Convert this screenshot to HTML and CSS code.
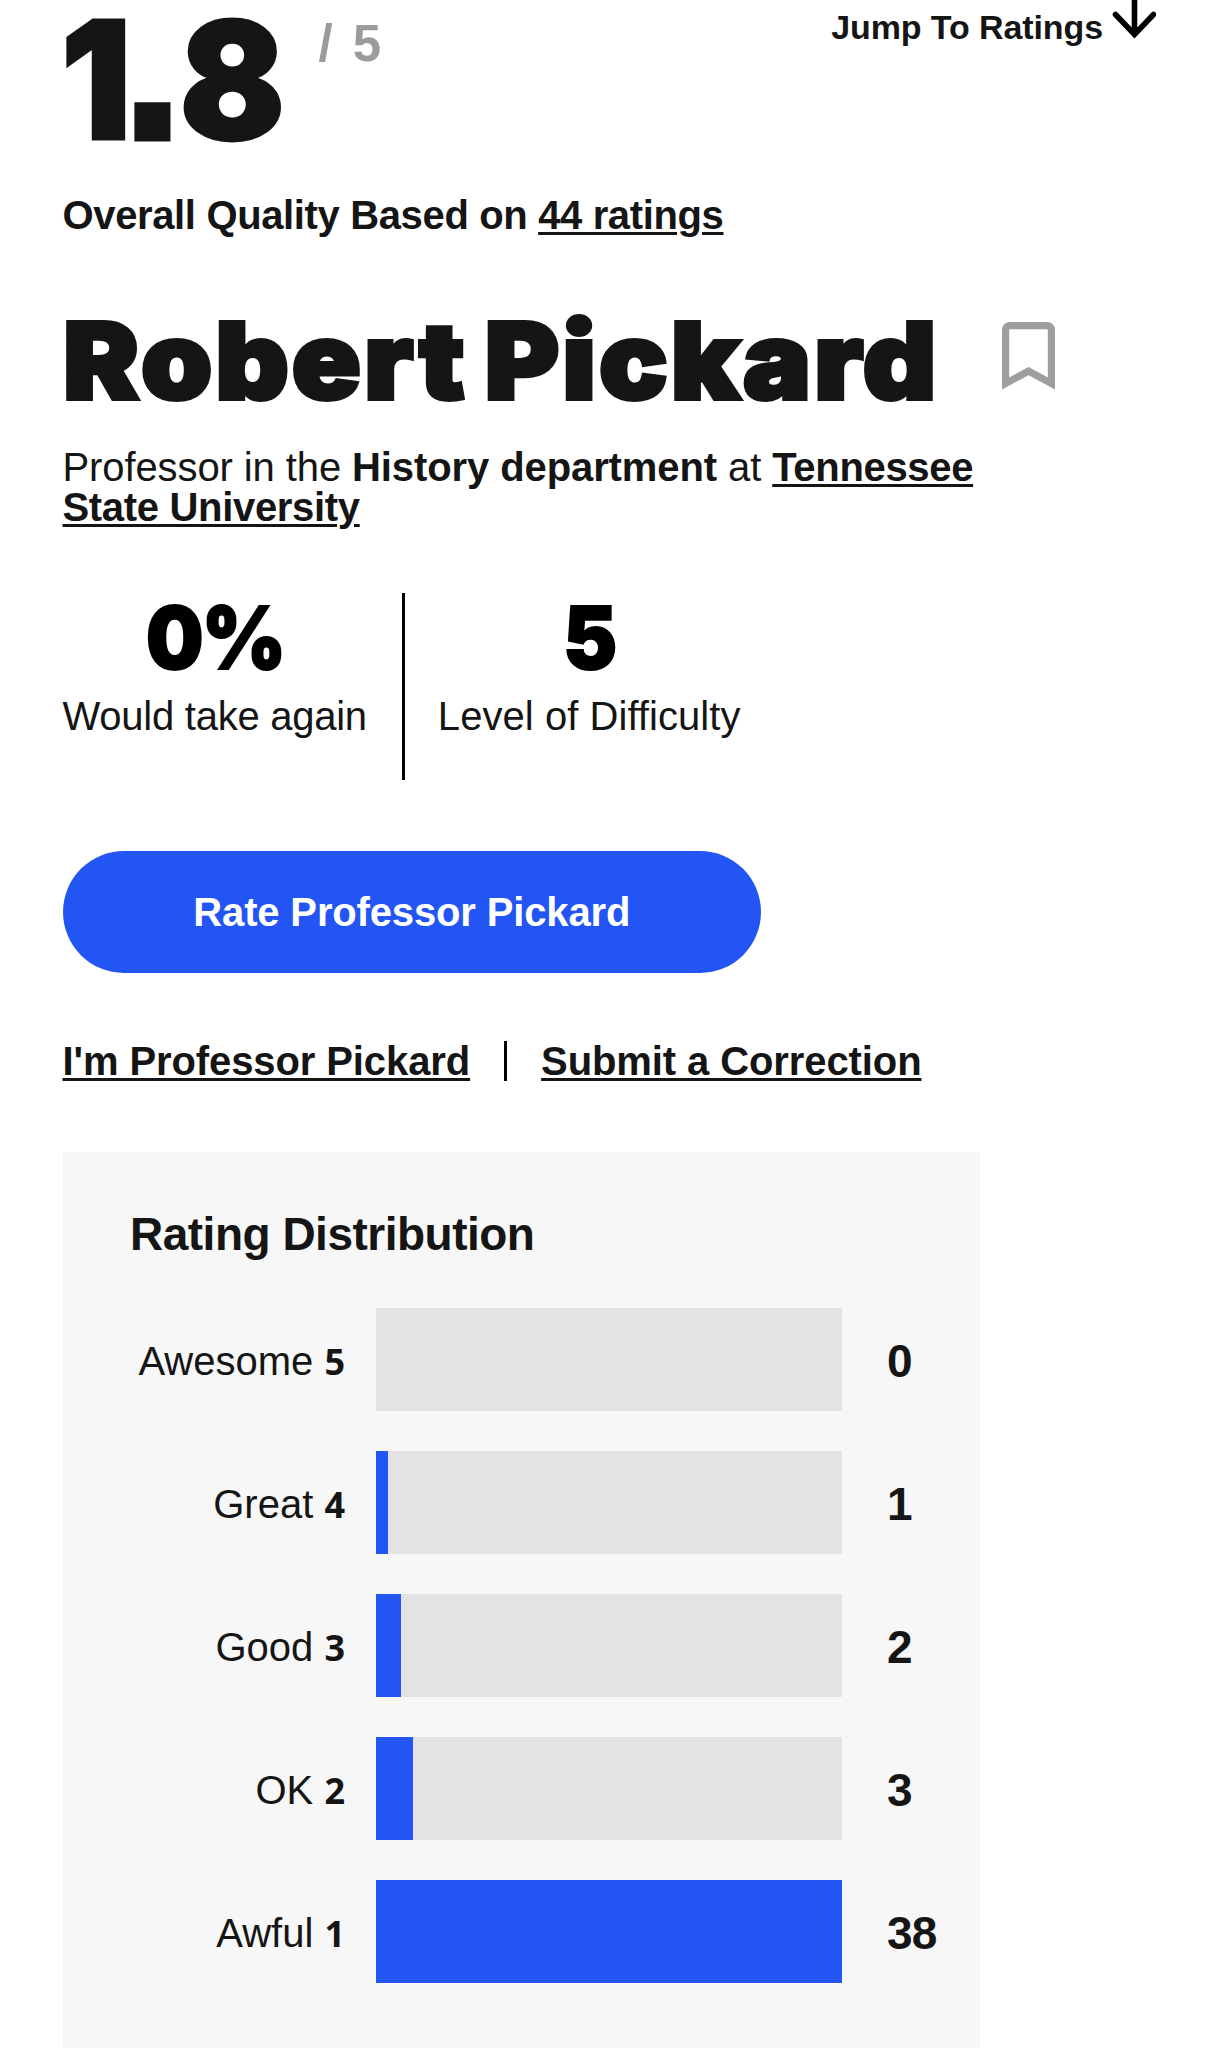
FILE: index.html
```html
<!DOCTYPE html>
<html lang="en">
<head>
  <meta charset="UTF-8">
  <meta name="viewport" content="width=device-width, initial-scale=1.0">
  <title>Robert Pickard at Tennessee State University</title>
  <link rel="stylesheet" href="styles.css">
</head>
<body>
  <main class="teacher">
    <header class="score-row">
      <div class="score">1<span class="score-dot">.</span>8</div>
      <div class="score-max">/ 5</div>
      <a class="jump" href="#ratings">
        <span>Jump To Ratings</span>
        <svg class="jump-arrow" width="44" height="42" viewBox="0 0 44 42" fill="none" stroke="#000" stroke-width="5.6" stroke-linecap="round">
          <path d="M22.5 -4V34M3.5 14.5L22.5 34.5L41.5 14.5"/>
        </svg>
      </a>
    </header>

    <div class="quality">Overall Quality Based on <a href="#ratings">44 ratings</a></div>

    <div class="name-row">
      <h1 class="name">Robert Pickard</h1>
      <svg class="bookmark" width="53" height="68" viewBox="0 0 53 68" fill="none" stroke="#9e9e9e" stroke-width="7.2">
        <path d="M3.6 61.5V7.6a4 4 0 0 1 4-4H45.4a4 4 0 0 1 4 4V61.5L26.5 49Z"/>
      </svg>
    </div>

    <div class="department">
      Professor in the <b>History department</b> at <a href="#school">Tennessee<br>State University</a>
    </div>

    <div class="stats">
      <div class="stat">
        <div class="stat-number">0%</div>
        <div class="stat-label">Would take again</div>
      </div>
      <div class="stat">
        <div class="stat-number">5</div>
        <div class="stat-label stat-label-wide">Level of Difficulty</div>
      </div>
    </div>

    <a class="rate-button" href="#rate">Rate Professor Pickard</a>

    <div class="links">
      <a href="#claim">I'm Professor Pickard</a>
      <span class="links-divider"></span>
      <a href="#correction">Submit a Correction</a>
    </div>

    <section class="distribution" id="ratings">
      <h2 class="distribution-title">Rating Distribution</h2>
      <ul class="bars">
        <li class="bar-row">
          <span class="bar-label">Awesome <b>5</b></span>
          <span class="bar"><span class="bar-fill" style="width: 0%"></span></span>
          <span class="bar-count">0</span>
        </li>
        <li class="bar-row">
          <span class="bar-label">Great <b>4</b></span>
          <span class="bar"><span class="bar-fill" style="width: 2.63%"></span></span>
          <span class="bar-count">1</span>
        </li>
        <li class="bar-row">
          <span class="bar-label">Good <b>3</b></span>
          <span class="bar"><span class="bar-fill" style="width: 5.26%"></span></span>
          <span class="bar-count">2</span>
        </li>
        <li class="bar-row">
          <span class="bar-label">OK <b>2</b></span>
          <span class="bar"><span class="bar-fill" style="width: 7.89%"></span></span>
          <span class="bar-count">3</span>
        </li>
        <li class="bar-row">
          <span class="bar-label">Awful <b>1</b></span>
          <span class="bar"><span class="bar-fill" style="width: 100%"></span></span>
          <span class="bar-count">38</span>
        </li>
      </ul>
    </section>
  </main>
</body>
</html>
```

FILE: styles.css
```css
:root {
  --text: #151515;
  --muted: #9b9b9b;
  --blue: #2255f4;
  --panel: #f7f7f7;
  --track: #e3e3e3;
}

* {
  margin: 0;
  padding: 0;
  box-sizing: border-box;
}

body {
  background: #fff;
  color: var(--text);
  font-family: "Liberation Sans", Arial, sans-serif;
  font-size: 40px;
  line-height: 40px;
  overflow: hidden;
}

a {
  color: inherit;
  font-weight: 700;
  text-decoration-thickness: 2.5px;
  text-underline-offset: 3px;
}

.teacher {
  height: 2048px;
  padding-left: 62.5px;
  overflow: hidden;
}

.score-row {
  display: flex;
  align-items: flex-start;
  height: 195px;
}

.score {
  width: 258px;
  margin-left: -2px;
  font-family: Inter, sans-serif;
  font-size: 163px;
  font-weight: 900;
  line-height: 160px;
  letter-spacing: 0;
  white-space: nowrap;
  transform: scaleX(0.95);
  transform-origin: left;
  -webkit-text-stroke: 3px var(--text);
}

.score-dot {
  font-family: "Liberation Sans", Arial, sans-serif;
  line-height: 0;
  letter-spacing: 6px;
  vertical-align: 5px;
  -webkit-text-stroke-width: 15px;
}

.score-max {
  margin-top: 18px;
  color: var(--muted);
  font-size: 51px;
  font-weight: 700;
  line-height: 52px;
  letter-spacing: 3px;
}

.jump {
  display: flex;
  margin-left: auto;
  margin-right: 62px;
  font-size: 34px;
  line-height: 34px;
  letter-spacing: -0.1px;
  text-decoration: none;
}

.jump span {
  margin-top: 10px;
}

.jump-arrow {
  margin-left: 9px;
}

.quality {
  font-weight: 700;
  letter-spacing: -0.36px;
}

.name-row {
  display: flex;
  align-items: flex-start;
  height: 110px;
  margin-top: 71px;
}

.name {
  width: 939px;
  font-family: Inter, sans-serif;
  font-size: 106px;
  font-weight: 900;
  line-height: 110px;
  letter-spacing: 2.8px;
  word-spacing: -8px;
  white-space: nowrap;
  transform: scaleX(1.075);
  transform-origin: left;
  -webkit-text-stroke: 4px var(--text);
}

.bookmark {
  margin-top: 16px;
}

.department {
  margin-top: 32px;
  line-height: 39.5px;
  letter-spacing: -0.1px;
}

.department a {
  letter-spacing: -0.32px;
}

.stats {
  display: flex;
  height: 187px;
  margin-top: 66px;
}

.stat {
  text-align: center;
}

.stat + .stat {
  margin-left: 35px;
  padding-left: 33px;
  border-left: 3px solid #000;
}

.stat-number {
  color: #000;
  font-family: Inter, sans-serif;
  font-size: 87px;
  font-weight: 900;
  line-height: 89px;
  letter-spacing: -2px;
  transform: scaleX(0.93);
  -webkit-text-stroke: 2px #000;
}

.stat-label {
  margin-top: 13.5px;
  letter-spacing: -0.25px;
}

.stat-label-wide {
  letter-spacing: 0.05px;
}

.rate-button {
  display: flex;
  align-items: center;
  justify-content: center;
  width: 698.5px;
  height: 122px;
  margin-top: 71px;
  border-radius: 61px;
  background: var(--blue);
  color: #fff;
  letter-spacing: -0.15px;
  text-decoration: none;
}

.links {
  display: flex;
  margin-top: 68px;
  letter-spacing: -0.1px;
}

.links-divider {
  width: 3px;
  height: 40px;
  margin: 0 34px;
  background: #000;
}

.distribution {
  width: 917.5px;
  height: 920px;
  margin-top: 71px;
  padding-top: 59px;
  background: var(--panel);
}

.distribution-title {
  padding-left: 67.5px;
  font-size: 46px;
  line-height: 46px;
  letter-spacing: -0.5px;
}

.bars {
  display: flex;
  flex-direction: column;
  gap: 40px;
  margin-top: 51px;
  list-style: none;
}

.bar-row {
  display: flex;
  align-items: center;
  height: 103px;
}

.bar-label {
  width: 282.5px;
  margin-right: 31px;
  padding-top: 2px;
  text-align: right;
}

.bar-label b {
  font-family: "Noto Sans", sans-serif;
  font-size: 36px;
  line-height: 36px;
}

.bar {
  width: 466px;
  height: 103px;
  background: var(--track);
}

.bar-fill {
  display: block;
  height: 100%;
  background: var(--blue);
}

.bar-count {
  padding-top: 3px;
  margin-left: 45px;
  font-size: 46px;
  font-weight: 700;
  line-height: 46px;
  letter-spacing: -0.8px;
}
```
